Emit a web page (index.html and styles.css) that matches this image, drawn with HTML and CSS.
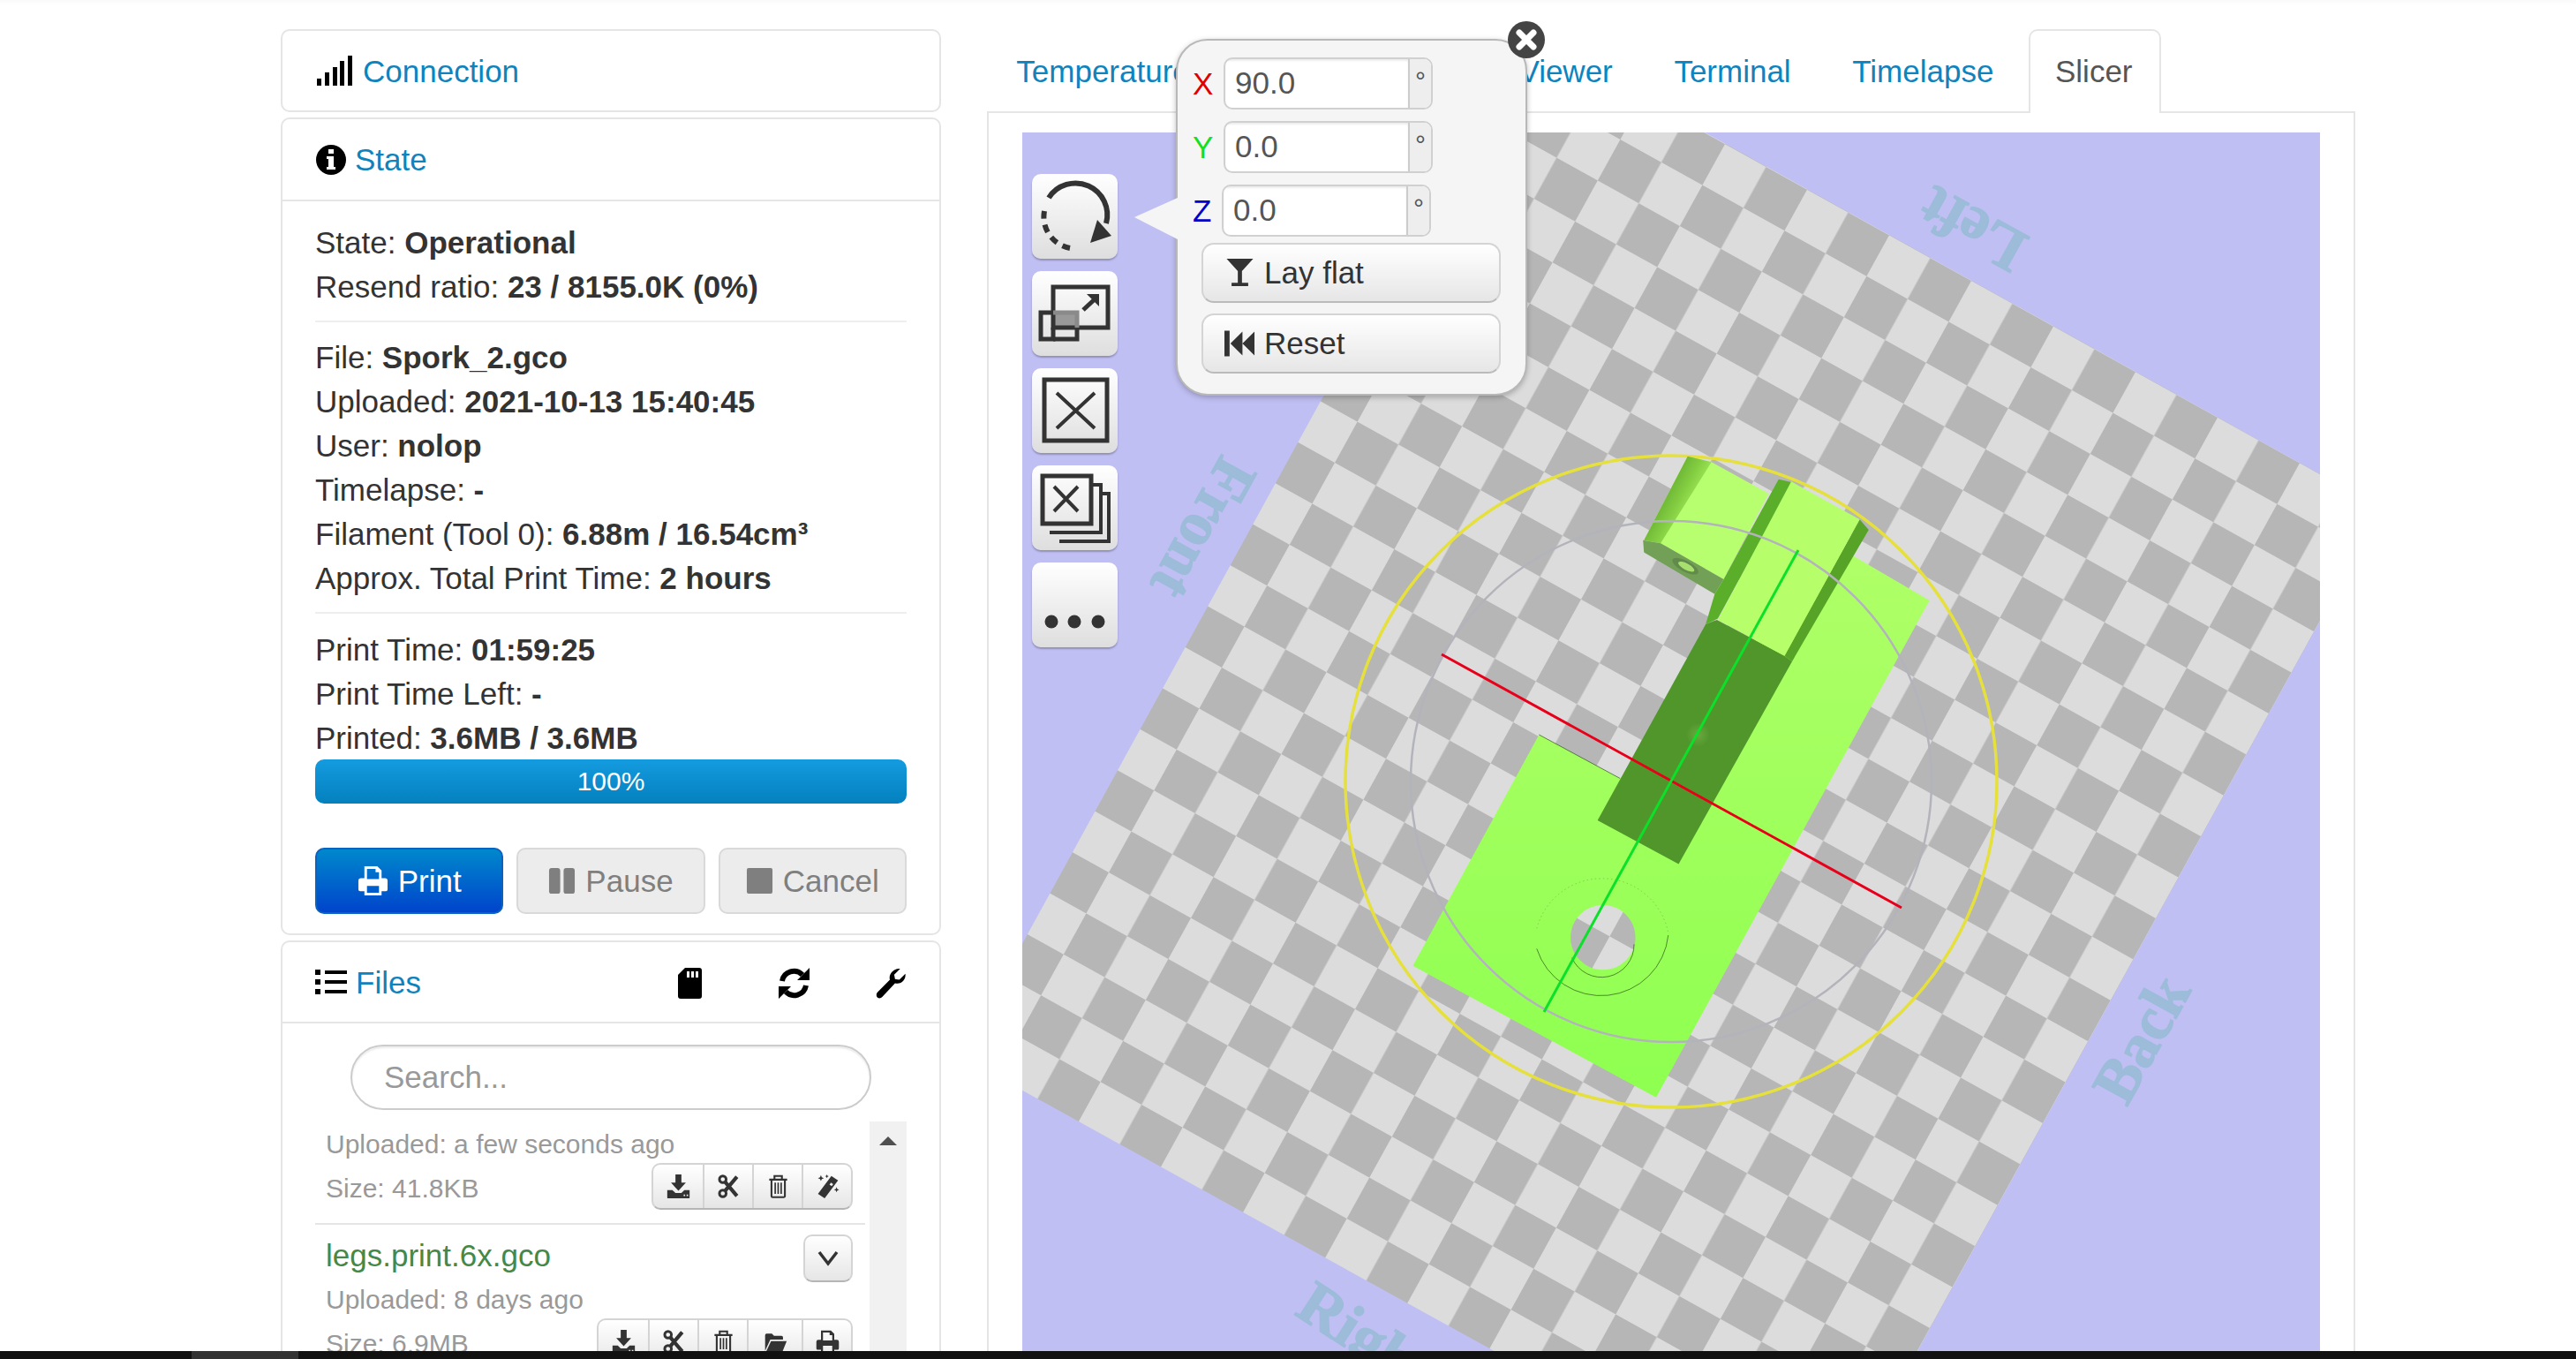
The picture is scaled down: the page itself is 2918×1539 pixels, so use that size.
FILE: index.html
```html
<!DOCTYPE html>
<html lang="en">
<head>
<meta charset="utf-8">
<title>OctoPrint</title>
<link rel="stylesheet" href="styles.css">
</head>
<body>
<svg class="defs" width="0" height="0" aria-hidden="true">
  <symbol id="i-print" viewBox="0 0 36 36"><path fill-rule="evenodd" d="M8 1h15l5 5v9h4a3 3 0 0 1 3 3v10a2 2 0 0 1-2 2h-5v5H8v-5H3a2 2 0 0 1-2-2V18a3 3 0 0 1 3-3h4zM11 4v12h14V8h-4V4zM11 24v8h14v-8z"/></symbol>
  <symbol id="i-dl" viewBox="0 0 32 32"><path d="M12 0h8v11h6L16 22 6 11h6z"/><path fill-rule="evenodd" d="M1 21h7l4 4h8l4-4h7v10a1 1 0 0 1-1 1H2a1 1 0 0 1-1-1zM23 27v2h2v-2zM27 27v2h2v-2z"/></symbol>
  <symbol id="i-cut" viewBox="0 0 32 32"><g fill="none" stroke="currentColor"><circle cx="8" cy="6.500" r="4.500" stroke-width="3.500"/><circle cx="8" cy="25.500" r="4.500" stroke-width="3.500"/><path stroke-width="5" d="M11 10l16 19M11 22L27 3"/></g></symbol>
  <symbol id="i-trash" viewBox="0 0 32 32"><g fill="none" stroke="currentColor" stroke-width="2.500"><path d="M4 7h24M11 6V2h10v4M7 7v22a1.500 1.500 0 0 0 1.500 1.500h15A1.500 1.500 0 0 0 25 29V7"/><path stroke-width="2" d="M12 11v15M16 11v15M20 11v15"/></g></symbol>
  <symbol id="i-wand" viewBox="0 0 32 32"><path d="M21 2l9 6L12 32l-9-6z"/><path fill="#eee" d="M20.500 11l3 2-2 2.700-3-2z"/><path d="M7 1l1.200 2.800L11 5 8.200 6.200 7 9 5.800 6.200 3 5l2.800-1.200zM15 0l.8 1.700 1.700.8-1.700.8L15 5l-.8-1.700-1.700-.8 1.700-.8zM28 17l1 2.500 2.500 1-2.500 1-1 2.500-1-2.500-2.500-1 2.500-1z"/></symbol>
  <symbol id="i-folder" viewBox="0 0 32 32"><path d="M2 28V7a2 2 0 0 1 2-2h7l3 3h10a2 2 0 0 1 2 2v3H9z"/><path d="M3 30l7-15h21l-6 15z"/></symbol>
  <symbol id="i-flat" viewBox="0 0 32 34"><path d="M0 0h32L18.500 15v14H26v4H6v-4h7.500V15z"/></symbol>
  <symbol id="i-reset" viewBox="0 0 36 30"><path d="M0 0h6v30H0zM7 15L21 1v28zM21 15L35 1v28z"/></symbol>
</svg>
<main class="page">
  <aside class="sidebar">
    <section class="panel">
      <header class="panel-head">
        <svg class="ico-signal" viewBox="0 0 40 34"><path d="M0 26h5v8H0zM9 19h5v15H9zM18 13h5v21h-5zM26 6h5v28h-5zM35 0h5v34h-5z"/></svg>
        <a class="head-link">Connection</a>
      </header>
    </section>
    <section class="panel">
      <header class="panel-head head-line">
        <svg class="ico-info" viewBox="0 0 34 34"><path fill-rule="evenodd" d="M17 0a17 17 0 1 1 0 34A17 17 0 0 1 17 0zM14 5v5h6V5zM12 13v3h2v9h-2v3h10v-3h-2V13z"/></svg>
        <a class="head-link">State</a>
      </header>
      <div class="state-body">
        <div>State: <strong>Operational</strong></div>
        <div>Resend ratio: <strong>23 / 8155.0K (0%)</strong></div>
        <hr class="rule rule-a">
        <div>File: <strong>Spork_2.gco</strong></div>
        <div>Uploaded: <strong>2021-10-13 15:40:45</strong></div>
        <div>User: <strong>nolop</strong></div>
        <div>Timelapse: <strong>-</strong></div>
        <div>Filament (Tool 0): <strong>6.88m / 16.54cm³</strong></div>
        <div>Approx. Total Print Time: <strong>2 hours</strong></div>
        <hr class="rule rule-b">
        <div>Print Time: <strong>01:59:25</strong></div>
        <div>Print Time Left: <strong>-</strong></div>
        <div>Printed: <strong>3.6MB / 3.6MB</strong></div>
        <div class="progress">100%</div>
        <div class="actions">
          <button class="act act-primary"><svg class="ico-act"><use href="#i-print"/></svg>Print</button>
          <button class="act act-off"><svg class="ico-act" viewBox="0 0 32 32"><path d="M1 4a3 3 0 0 1 3-3h7a3 3 0 0 1 3 3v24a3 3 0 0 1-3 3H4a3 3 0 0 1-3-3zM18 4a3 3 0 0 1 3-3h7a3 3 0 0 1 3 3v24a3 3 0 0 1-3 3h-7a3 3 0 0 1-3-3z"/></svg>Pause</button>
          <button class="act act-off"><svg class="ico-act" viewBox="0 0 32 32"><rect x="1" y="1" width="30" height="30" rx="2"/></svg>Cancel</button>
        </div>
      </div>
    </section>
    <section class="panel">
      <header class="panel-head head-line head-files">
        <svg class="ico-list" viewBox="0 0 36 28"><path d="M0 0h6v6H0zM0 11h6v6H0zM0 22h6v6H0zM11 1h25v4H11zM11 12h25v4H11zM11 23h25v4H11z"/></svg>
        <a class="head-link">Files</a>
        <span class="head-tools">
          <svg class="ico-sd" viewBox="0 0 27 35"><path fill-rule="evenodd" d="M8 0h16a3 3 0 0 1 3 3v29a3 3 0 0 1-3 3H3a3 3 0 0 1-3-3V8zM10 4v7h3V4zM15 4v7h3V4zM20 4v7h3V4z"/></svg>
          <svg class="ico-refresh" viewBox="0 0 35 35"><g fill="none" stroke="#000" stroke-width="6"><path d="M4 15A13.500 13.500 0 0 1 27 8"/><path d="M31 20A13.500 13.500 0 0 1 8 27"/></g><path d="M35 0v14H21zM0 35V21h14z"/></svg>
          <svg class="ico-wrench" viewBox="0 0 36 36"><path d="M35 7c1 6-4 13-12 11L9 33c-2 3-6 3-7 1s-1-4 1-6l14-14C15 7 22 0 29 1l-7 7 1 5 5 1z"/></svg>
        </span>
      </header>
      <div class="files-body">
        <input class="search" placeholder="Search...">
        <div class="list-area">
          <div class="list">
            <article class="file">
              <div class="meta">Uploaded: a few seconds ago</div>
              <div class="meta-row">
                <span class="meta">Size: 41.8KB</span>
                <span class="btn-group">
                  <button class="gb"><svg class="ico-gb"><use href="#i-dl"/></svg></button>
                  <button class="gb"><svg class="ico-gb"><use href="#i-cut"/></svg></button>
                  <button class="gb"><svg class="ico-gb"><use href="#i-trash"/></svg></button>
                  <button class="gb"><svg class="ico-gb"><use href="#i-wand"/></svg></button>
                </span>
              </div>
            </article>
            <article class="file file-next">
              <div class="name-row">
                <span class="file-name">legs.print.6x.gco</span>
                <button class="toggle"><svg class="ico-chev" viewBox="0 0 24 18"><path d="M2 2l10 13L22 2" fill="none" stroke="#333" stroke-width="3.500"/></svg></button>
              </div>
              <div class="meta">Uploaded: 8 days ago</div>
              <div class="meta-row">
                <span class="meta">Size: 6.9MB</span>
                <span class="btn-group">
                  <button class="gb"><svg class="ico-gb"><use href="#i-dl"/></svg></button>
                  <button class="gb"><svg class="ico-gb"><use href="#i-cut"/></svg></button>
                  <button class="gb"><svg class="ico-gb"><use href="#i-trash"/></svg></button>
                  <button class="gb gb-wide"><svg class="ico-gb"><use href="#i-folder"/></svg></button>
                  <button class="gb"><svg class="ico-gb"><use href="#i-print"/></svg></button>
                </span>
              </div>
            </article>
          </div>
          <div class="scrollbar"><span class="scroll-up"></span></div>
        </div>
      </div>
    </section>
  </aside>

  <section class="content">
    <nav class="tabs">
      <a class="tab">Temperature</a>
      <a class="tab">Control</a>
      <a class="tab">GCode Viewer</a>
      <a class="tab">Terminal</a>
      <a class="tab">Timelapse</a>
      <a class="tab tab-active">Slicer</a>
    </nav>
    <div class="tab-pane">
      <div class="stage">
        <svg class="scene" viewBox="1157 150 1470 1380" width="1470" height="1380">
          <defs>
            <pattern id="checks" patternUnits="userSpaceOnUse" width="2" height="2" patternTransform="matrix(-46.500 -25.800 -25.600 46.400 2697 576)">
              <rect width="2" height="2" fill="#dcdcdc"/>
              <rect width="1" height="1" fill="#b6b6b6"/>
              <rect x="1" y="1" width="1" height="1" fill="#b6b6b6"/>
            </pattern>
            <linearGradient id="plate" x1="0" y1="0" x2="0" y2="1"><stop offset="0" stop-color="#b0ff68"/><stop offset="1" stop-color="#8eff50"/></linearGradient>
            <linearGradient id="curve" gradientUnits="userSpaceOnUse" x1="735" y1="150" x2="835" y2="205"><stop offset="0" stop-color="#5fa62e"/><stop offset=".5" stop-color="#86d043"/><stop offset="1" stop-color="#b8ff70"/></linearGradient>
            <radialGradient id="dimple"><stop offset="0" stop-color="#6aa83f"/><stop offset="1" stop-color="#4f952b"/></radialGradient>
          </defs>
          <rect class="sky" x="1157" y="150" width="1470" height="1380"/>
          <polygon points="1725,36 2697,576 2059,1733 1087,1196" fill="url(#checks)"/>
          <text class="wall-label" transform="translate(1356 595) rotate(119)" y="16">Front</text>
          <text class="wall-label" transform="translate(2237 253) rotate(209)" y="16">Left</text>
          <text class="wall-label" transform="translate(2431 1180) rotate(-61)" y="16">Back</text>
          <text class="wall-label wall-start" transform="translate(1464 1488) rotate(33)">Right</text>
          <circle class="ring-yellow" cx="1892" cy="885" r="369"/>
          <g transform="translate(1500 480) scale(.5102)">
            <path fill="url(#plate)" fill-rule="evenodd" d="M195 1203L475 690l180 97 495-507 192 112L735 1495zM617 1068a72 72 0 1 0 .1 0z"/>
            <path class="hair" d="M475 690l180 97"/>
            <path class="hair" d="M548 1185a72 72 0 0 0 138-30"/>
            <path class="hair" d="M470 1165a150 150 0 0 0 292-30"/>
            <path class="hair-faint" d="M470 1120a150 150 0 0 1 292 10"/>
            <polygon points="708,258 805,72 858,85 985,155 885,345 745,265" fill="#b8ff70"/>
            <polygon points="708,258 805,72 858,85 745,265" fill="url(#curve)"/>
            <polygon points="706,258 745,265 885,345 865,378 708,285" fill="#71a056"/>
            <ellipse cx="800" cy="316" rx="32" ry="12" transform="rotate(28 800 316)" fill="#628a4a"/>
            <ellipse cx="802" cy="317" rx="20" ry="7" transform="rotate(28 802 317)" fill="#a8e070"/>
            <polygon points="605,880 785,977 1037,527 1020,515 870,435 845,445" fill="#50962b"/>
            <circle cx="828" cy="690" r="28" fill="url(#dimple)"/>
            <polygon points="845,445 872,432 1037,130 1007,123 885,345 865,378" fill="#5aae2a"/>
            <polygon points="1020,515 1037,527 1207,235 1187,212" fill="#56a327"/>
            <polygon points="872,435 1020,515 1187,212 1035,128" fill="#b6ff6a"/>
          </g>
          <circle class="ring-grey" cx="1892" cy="885" r="295"/>
          <line class="axis-red" x1="1632" y1="741" x2="2153" y2="1028"/>
          <line class="axis-green" x1="2036" y1="623" x2="1748" y2="1146"/>
        </svg>

        <div class="tools">
          <button class="tool"><svg class="ico-tool" viewBox="0 0 97 96"><g fill="none" stroke="#333" stroke-width="6"><path d="M19 27A36 36 0 0 1 84 56"/><path stroke-dasharray="9 7" d="M43 84A36 36 0 0 1 14 42"/></g><path fill="#333" d="M66 78l24-8-16-18z"/></svg></button>
          <button class="tool"><svg class="ico-tool" viewBox="0 0 97 96"><rect x="24" y="47" width="27" height="17" fill="#999"/><g fill="none" stroke="#333" stroke-width="5"><rect x="24" y="18" width="62" height="46"/><path stroke="#8a8a8a" d="M24 47h27v17"/><path d="M24 64v13H10V47h14"/><path d="M51 64v13H24"/><path stroke-width="5" d="M58 44l14-13"/></g><path fill="#333" d="M62 26h14v14z"/></svg></button>
          <button class="tool"><svg class="ico-tool" viewBox="0 0 97 96"><g fill="none" stroke="#333" stroke-width="5"><rect x="14" y="13" width="71" height="69"/><path stroke-width="4" d="M28 28l43 40M71 28L28 68"/></g></svg></button>
          <button class="tool"><svg class="ico-tool" viewBox="0 0 97 96"><g fill="none" stroke="#333" stroke-width="5"><rect x="12" y="12" width="55" height="54"/><path stroke-width="4" d="M25 24l27 28M52 24L25 52"/><path stroke-width="4" d="M69 22h9v54H20M80 32h7v54H31"/></g></svg></button>
          <button class="tool"><svg class="ico-tool" viewBox="0 0 97 96"><g fill="#333"><circle cx="22" cy="67" r="7.500"/><circle cx="48" cy="67" r="7.500"/><circle cx="75" cy="67" r="7.500"/></g></svg></button>
        </div>

        <div class="popup">
          <span class="popup-arrow"></span>
          <span class="popup-close"><svg viewBox="0 0 44 44"><circle cx="22" cy="22" r="21" fill="#444"/><path d="M14 14l16 16M30 14L14 30" stroke="#fff" stroke-width="7" stroke-linecap="round"/></svg></span>
          <div class="axis-row"><label class="axis axis-x">X</label><span class="spin"><span class="spin-field">90.0</span><span class="spin-unit">°</span></span></div>
          <div class="axis-row"><label class="axis axis-y">Y</label><span class="spin"><span class="spin-field">0.0</span><span class="spin-unit">°</span></span></div>
          <div class="axis-row axis-row-z"><label class="axis axis-z">Z</label><span class="spin"><span class="spin-field">0.0</span><span class="spin-unit">°</span></span></div>
          <button class="pop-btn"><svg class="ico-pop"><use href="#i-flat"/></svg>Lay flat</button>
          <button class="pop-btn"><svg class="ico-pop"><use href="#i-reset"/></svg>Reset</button>
        </div>
      </div>
    </div>
  </section>
</main>
<footer class="screen-edge"><span class="screen-edge-thumb"></span></footer>
</body>
</html>
```
FILE: styles.css
```css
* { box-sizing: border-box; }
html, body { margin: 0; height: 100%; }
body {
  display: flex;
  flex-direction: column;
  height: 1539px;
  overflow: hidden;
  background: linear-gradient(#fafafa, #fff 6px);
  color: #333;
  font-family: "Liberation Sans", Arial, sans-serif;
  font-size: 35px;
  line-height: 50px;
}
.defs { position: absolute; }
button { font: inherit; color: inherit; cursor: default; }
a { color: #0f83bd; }

.page {
  flex: 1 1 auto;
  min-height: 0;
  overflow: hidden;
  display: flex;
  align-items: flex-start;
  gap: 52px;
  padding: 33px 0 0 318px;
}

/* sidebar */
.sidebar {
  flex: 0 0 747px;
  display: flex;
  flex-direction: column;
  gap: 6px;
}
.panel {
  border: 2px solid #e5e5e5;
  border-radius: 10px;
  background: #fff;
}
.panel-head {
  display: flex;
  align-items: center;
  padding: 21px 37px 19px;
}
.head-line { border-bottom: 2px solid #e5e5e5; padding-bottom: 20px; }
.head-files { padding-top: 21px; padding-bottom: 19px; }
.ico-signal { width: 40px; height: 34px; margin: 0 12px 2px 2px; }
.ico-info { width: 34px; height: 34px; margin: 0 10px 0 1px; }
.ico-list { width: 36px; height: 28px; margin: 0 10px 2px 0; }
.head-tools { margin-left: auto; display: flex; align-items: center; }
.ico-sd { width: 27px; height: 35px; }
.ico-refresh { width: 35px; height: 35px; margin-left: 87px; }
.ico-wrench { width: 36px; height: 35px; margin-left: 74px; }

.state-body { padding: 22px 37px 22px; }
.rule { border: 0; height: 2px; background: #eee; margin: 0; }
.rule-a { margin: 13px 0 15px; }
.rule-b { margin: 13px 0 16px; }
.progress {
  height: 50px;
  margin-top: -1px;
  border-radius: 10px;
  background: linear-gradient(#149bdf, #0480be);
  color: #fff;
  font-size: 30px;
  text-align: center;
}
.actions { display: flex; gap: 15px; margin-top: 50px; }
.act {
  flex: 1 1 0;
  height: 75px;
  padding: 0;
  display: flex;
  align-items: center;
  justify-content: center;
  gap: 11px;
  border-radius: 10px;
  border: 2px solid #d9d9d9;
}
.act-primary {
  background: linear-gradient(#0088cc, #0044cc);
  border-color: #0a63c0;
  color: #fff;
  fill: #fff;
}
.act-off { background: #ececec; color: #7f7f7f; fill: #7f7f7f; }
.ico-act { width: 35px; height: 35px; }
.act-off .ico-act { width: 31px; height: 31px; }

.files-body { padding: 24px 37px 0; }
.search {
  display: block;
  width: 590px;
  height: 74px;
  margin-left: 40px;
  padding: 0 20px 0 36px;
  border: 2px solid #ccc;
  border-radius: 37px;
  font: inherit;
  box-shadow: inset 0 2px 2px rgba(0, 0, 0, .08);
}
.search::placeholder { color: #999; opacity: 1; }
.list-area { display: flex; margin-top: 13px; height: 300px; }
.list { flex: 0 0 628px; padding-top: 1px; }
.scrollbar { flex: 0 0 42px; background: #f1f1f1; display: flex; justify-content: center; padding-top: 17px; }
.scroll-up {
  width: 0;
  height: 0;
  border-left: 10px solid transparent;
  border-right: 10px solid transparent;
  border-bottom: 10px solid #505050;
}
.file { width: 623px; padding: 0 14px 14px 12px; border-bottom: 2px solid #e5e5e5; }
.file-next { padding-top: 10px; border-bottom: 0; }
.meta { color: #999; font-size: 30px; }
.meta-row { display: flex; justify-content: space-between; align-items: flex-start; height: 50px; }
.btn-group {
  display: flex;
  height: 53px;
  margin-top: -4px;
  border: 2px solid #d4d4d4;
  border-bottom-color: #b5b5b5;
  border-radius: 10px;
  overflow: hidden;
  background: linear-gradient(#fff, #e6e6e6);
}
.gb {
  width: 56px;
  padding: 0;
  border: 0;
  border-left: 2px solid #d4d4d4;
  background: transparent;
  display: flex;
  align-items: center;
  justify-content: center;
  color: #333;
  fill: #333;
}
.gb:first-child { border-left: 0; }
.gb-wide { width: 62px; }
.ico-gb { width: 27px; height: 27px; }
.name-row { display: flex; justify-content: space-between; align-items: flex-start; height: 50px; }
.file-name { color: #468847; }
.toggle {
  width: 56px;
  height: 54px;
  margin-top: 1px;
  padding: 0;
  display: flex;
  align-items: center;
  justify-content: center;
  border: 2px solid #d4d4d4;
  border-bottom-color: #b5b5b5;
  border-radius: 10px;
  background: linear-gradient(#fff, #e6e6e6);
}
.ico-chev { width: 24px; height: 18px; }

/* right side */
.content { flex: 0 0 1550px; }
.tabs { display: flex; gap: 9px; border-bottom: 2px solid #e5e5e5; height: 95px; padding-left: 3px; }
.tab {
  padding: 21px 28.300px;
  height: 95px;
  border: 2px solid transparent;
  border-bottom: 0;
  border-radius: 10px 10px 0 0;
}
.tab-active { border-color: #e5e5e5; background: #fff; color: #555; padding-right: 30.300px; }
.tab-pane {
  border: 2px solid #e5e5e5;
  border-top: 0;
  padding: 22px 38px 0;
  height: 1500px;
}
.stage { position: relative; width: 1470px; height: 1380px; }
.scene { display: block; }
.sky { fill: #c0bff3; }
.wall-label {
  fill: #9cbcd9;
  stroke: #9cbcd9;
  stroke-width: 1.500px;
  font: bold 70px "Liberation Serif", serif;
  text-anchor: middle;
}
.wall-start { text-anchor: start; }
.ring-yellow { fill: none; stroke: #e6e03c; stroke-width: 3.500; }
.ring-grey { fill: none; stroke: #b3b3bc; stroke-width: 2.500; }
.hair { fill: none; stroke: #1e3a10; stroke-width: 1.200; }
.hair-faint { fill: none; stroke: #6f9a4a; stroke-width: 1; stroke-dasharray: 3 6; }
.axis-red { stroke: #e8001a; stroke-width: 3; }
.axis-green { stroke: #0ce02a; stroke-width: 3; }

.tools {
  position: absolute;
  left: 11px;
  top: 47px;
  display: flex;
  flex-direction: column;
  gap: 14px;
}
.tool {
  width: 97px;
  height: 96px;
  padding: 0;
  border: 0;
  border-radius: 10px;
  background: linear-gradient(#fff, #dedede);
  box-shadow: 0 2px 2px rgba(0, 0, 0, .25);
}
.ico-tool { display: block; width: 97px; height: 96px; }

.popup {
  position: absolute;
  left: 174px;
  top: -106px;
  width: 398px;
  height: 404px;
  padding: 19px 0 0 17px;
  background: #f5f5f5;
  border: 2px solid #b8b8b8;
  border-radius: 36px;
  box-shadow: 0 2px 6px rgba(0, 0, 0, .25);
  display: flex;
  flex-direction: column;
  align-items: flex-start;
}
.popup-arrow {
  position: absolute;
  left: -49px;
  top: 178px;
  width: 49px;
  height: 47px;
  background: #f5f5f5;
  clip-path: polygon(100% 0, 100% 100%, 0 47%);
}
.popup-close { position: absolute; right: -23px; top: -23px; width: 44px; height: 44px; }
.popup-close svg { display: block; width: 44px; height: 44px; }
.axis-row { display: flex; align-items: center; height: 59px; margin-bottom: 13px; }
.axis-row-z { margin-bottom: 7px; }
.axis { width: 35px; }
.axis-row-z .axis { width: 33px; }
.axis-x { color: #e00000; }
.axis-y { color: #12e020; }
.axis-z { color: #0000cc; }
.spin {
  display: flex;
  width: 237px;
  height: 59px;
  border: 2px solid #d0d0d0;
  border-radius: 10px;
  overflow: hidden;
  background: #fff;
  color: #555;
}
.spin-field { flex: 1; padding-left: 11px; line-height: 54px; box-shadow: inset 0 2px 2px rgba(0, 0, 0, .08); }
.spin-unit {
  flex: 0 0 26px;
  background: #eee;
  border-left: 2px solid #ccc;
  text-align: center;
  font-size: 30px;
  line-height: 50px;
}
.pop-btn {
  width: 339px;
  height: 68px;
  margin: 0 0 12px 10px;
  padding: 0 0 0 24px;
  display: flex;
  align-items: center;
  gap: 10px;
  border: 2px solid #d4d4d4;
  border-bottom-color: #bbb;
  border-radius: 14px;
  background: linear-gradient(#fff, #e6e6e6);
  color: #333;
  fill: #333;
}
.ico-pop { width: 35px; height: 32px; }

.screen-edge { flex: 0 0 9px; background: #111; padding-left: 217px; }
.screen-edge-thumb { display: block; width: 121px; height: 9px; background: #333; }
```
